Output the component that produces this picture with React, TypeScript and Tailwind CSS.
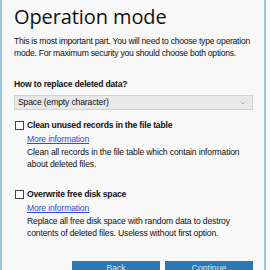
import { ChevronDown } from "lucide-react";

export default function App() {
  return (
    <div className="flex h-[270px] w-[270px] overflow-hidden bg-white" style={{ fontFamily: '"Liberation Sans", Arial, sans-serif' }}>
      <div className="w-[2px] bg-[#9cc6dd]" />
      <main className="flex w-[262px] flex-col bg-[#f8f8f8] pl-[12px] pr-[11px] text-[#111]">
        <h1 className="mt-[4px] text-[20px] font-medium leading-[26px] tracking-[-0.1px] text-[#111]" style={{ fontFamily: '"Open Sans", sans-serif' }}>
          Operation mode
        </h1>
        <p className="mt-[5px] -mr-[2px] text-[8.6px] leading-[12px] tracking-[-0.25px]">
          This is most important part. You will need to choose type operation mode. For maximum security you should choose both options.
        </p>
        <h2 className="mt-[19px] text-[8.6px] font-bold leading-[12px] tracking-[-0.2px]">How to replace deleted data?</h2>
        <div className="mt-[5px] flex h-[15px] items-center justify-between border border-[#d2d2d2] bg-[#e8e8e8] pl-[3px] pr-[5px] text-[8.6px] tracking-[-0.15px]">
          <span>Space (empty character)</span>
          <ChevronDown size={8} className="text-[#888]" />
        </div>
        <Option
          className="mt-[9px]"
          title="Clean unused records in the file table"
          text="Clean all records in the file table which contain information about deleted files."
        />
        <Option
          className="mt-[18px]"
          title="Overwrite free disk space"
          text="Replace all free disk space with random data to destroy contents of deleted files. Useless without first option."
        />
        <div className="mt-auto flex justify-end gap-[5px]">
          <button className="h-[9px] w-[88px] overflow-hidden bg-[#2b78b5] pt-[1px] text-[8.6px] leading-[12px] text-[#dbe9f5]">Back</button>
          <button className="h-[9px] w-[88px] overflow-hidden bg-[#2b78b5] pt-[1px] text-[8.6px] leading-[12px] text-[#dbe9f5]">Continue</button>
        </div>
      </main>
      <div className="w-[2px] bg-[#9cc6dd]" />
      <div className="flex-1 bg-[#fafcfd]" />
    </div>
  );
}

function Option({ title, text, className }: { title: string; text: string; className?: string }) {
  return (
    <div className={`flex gap-[3px] ${className ?? ""}`}>
      <div className="mt-[2px] ml-[1px] h-[9px] w-[9px] shrink-0 border border-[#444] bg-white" />
      <div className="flex flex-col">
        <span className="text-[8.6px] font-bold leading-[12px] tracking-[-0.2px]">{title}</span>
        <a className="mt-[2px] text-[8.6px] leading-[12px] tracking-[-0.15px] text-[#2a4fd0] underline">More information</a>
        <p className="mt-[1px] text-[8.6px] leading-[12px] tracking-[-0.15px]">{text}</p>
      </div>
    </div>
  );
}
